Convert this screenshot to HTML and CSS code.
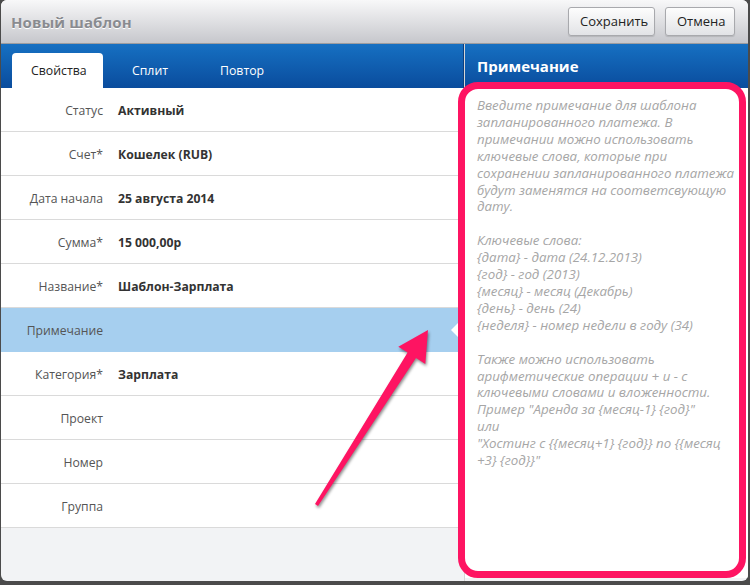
FILE: index.html
```html
<!DOCTYPE html>
<html lang="ru">
<head>
    <meta charset="UTF-8">
    <title>Новый шаблон</title>
    <link rel="stylesheet" href="styles.css">
</head>
<body>

    <div class="window">
        <div class="titlebar">
            <h1>Новый шаблон</h1>
            <div class="actions">
                <button type="button" class="save">Сохранить</button>
                <button type="button" class="cancel">Отмена</button>
            </div>
        </div>

        <div class="main">
            <div class="left">
                <div class="tabs">
                    <div class="tab active">Свойства</div>
                    <div class="tab">Сплит</div>
                    <div class="tab">Повтор</div>
                </div>
                <div class="fields">
                    <div class="row"><span class="label">Статус</span><span class="value">Активный</span></div>
                    <div class="row"><span class="label">Счет*</span><span class="value">Кошелек (RUB)</span></div>
                    <div class="row"><span class="label">Дата начала</span><span class="value">25 августа 2014</span></div>
                    <div class="row"><span class="label">Сумма*</span><span class="value">15 000,00р</span></div>
                    <div class="row"><span class="label">Название*</span><span class="value">Шаблон-Зарплата</span></div>
                    <div class="row selected"><span class="label">Примечание</span><span class="value"></span></div>
                    <div class="row"><span class="label">Категория*</span><span class="value">Зарплата</span></div>
                    <div class="row"><span class="label">Проект</span><span class="value"></span></div>
                    <div class="row"><span class="label">Номер</span><span class="value"></span></div>
                    <div class="row"><span class="label">Группа</span><span class="value"></span></div>
                </div>
            </div>

            <div class="right">
                <div class="note-head">Примечание</div>
                <div class="note-body">Введите примечание для шаблона
запланированного платежа. В
примечании можно использовать
ключевые слова, которые при
сохранении запланированного платежа
будут заменятся на соответсвующую
дату.

Ключевые слова:
{дата} - дата (24.12.2013)
{год} - год (2013)
{месяц} - месяц (Декабрь)
{день} - день (24)
{неделя} - номер недели в году (34)

Также можно использовать
арифметические операции + и - с
ключевыми словами и вложенности.
Пример "Аренда за {месяц-1} {год}"
или
"Хостинг с {{месяц+1} {год}} по {{месяц
+3} {год}}"</div>
            </div>
        </div>

        <!-- annotation -->
        <div class="mark"></div>
        <svg class="arrow" width="750" height="585" viewBox="0 0 750 585">
            <polygon points="314,504 406.6,352.6 397.3,346.7 427,330 424.3,363.9 415,358 317,506" fill="#fe1462"/>
        </svg>
    </div>

</body>
</html>
```

FILE: styles.css
```css
body {
    margin: 0;
    background: #4b4b4b;
    font-family: 'Open Sans', 'Noto Sans', sans-serif;
    color: #333;
}

.window {
    position: relative;
    width: 747px;
    height: 581px;
    margin-left: 1px;
    background: #f2f3f5;
    border-radius: 6px;
    overflow: hidden;
    display: flex;
    flex-direction: column;
}

.titlebar {
    height: 43px;
    display: flex;
    align-items: center;
    justify-content: space-between;
    padding: 0 13px 0 10px;
    background: linear-gradient(#f8f8f9, #c6c7cc);
    border-bottom: 1px solid #9b9ca0;
}

.titlebar h1 {
    margin: 0;
    font-size: 15px;
    font-weight: bold;
    color: #898b90;
    text-shadow: 0 1px 0 #fff;
    letter-spacing: 0.1px;
}

.actions {
    display: flex;
    gap: 10px;
    margin-top: -1px;
}

.actions button {
    height: 29px;
    padding: 0 11px;
    font-family: inherit;
    font-size: 13px;
    color: #222;
    background: linear-gradient(#fdfdfd, #e2e3e6);
    border: 1px solid #a8a9ad;
    border-radius: 3px;
    box-shadow: 0 1px 1px rgba(0, 0, 0, 0.12);
}

.save {
    width: 87px;
}

.cancel {
    width: 70px;
}

.main {
    flex: 1;
    display: flex;
}

.left {
    width: 463px;
    border-right: 1px solid #d6d6d6;
    display: flex;
    flex-direction: column;
}

.tabs {
    height: 44px;
    display: flex;
    align-items: flex-end;
    padding-left: 11px;
    background: linear-gradient(#1670c2, #0a4c9d);
    border-right: 1px solid #0b3f80;
}

.tab {
    height: 35px;
    line-height: 36px;
    padding: 0 23px 0 19px;
    margin-right: 10px;
    font-size: 12.3px;
    color: #fff;
}

.tab.active {
    width: 52px;
    padding-right: 20px;
    background: #fff;
    color: #222;
    border-radius: 4px 4px 0 0;
}

.fields {
    background: #fff;
}

.row {
    position: relative;
    height: 42px;
    padding-top: 1px;
    display: flex;
    align-items: center;
    border-bottom: 1px solid #dadada;
    font-size: 12.2px;
}

.row .label {
    width: 102px;
    text-align: right;
    color: #555;
}

.row .value {
    margin-left: 15px;
    font-weight: bold;
    color: #333;
}

.row.selected {
    background: #a6cfef;
    border-bottom-color: #a6cfef;
}

.row.selected::after {
    content: "";
    position: absolute;
    right: -1px;
    top: 8px;
    border: 14px solid transparent;
    border-right-color: #fff;
}

.right {
    flex: 1;
    display: flex;
    flex-direction: column;
}

.note-head {
    height: 44px;
    line-height: 44px;
    padding-left: 12px;
    font-size: 15px;
    font-weight: bold;
    color: #fff;
    background: linear-gradient(#1670c2, #0a4c9d);
}

.note-body {
    flex: 1;
    background: #fff;
    padding: 9px 0 0 12px;
    font-size: 13.3px;
    line-height: 16.9px;
    font-style: italic;
    color: #a6a6a6;
    white-space: pre-line;
    margin-bottom: 3px;
}

.mark {
    position: absolute;
    left: 457px;
    top: 82px;
    width: 274px;
    height: 482px;
    border: 7px solid #fe1462;
    border-radius: 20px;
}

.arrow {
    position: absolute;
    left: 0;
    top: 0;
    filter: drop-shadow(1px 2px 1.5px rgba(0, 0, 0, 0.45));
}
```
